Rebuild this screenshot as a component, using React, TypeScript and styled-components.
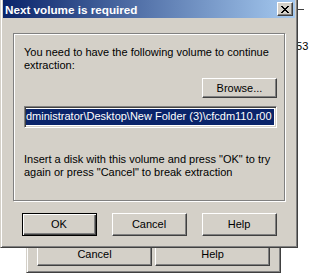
import React from "react";
import styled, { createGlobalStyle, css } from "styled-components";

const colors = {
  face: "#d4d0c8",
  light: "#ffffff",
  shadow: "#808080",
  dark: "#404040",
  navy: "#0a246a",
  sky: "#a6caf0",
};

const GlobalStyle = createGlobalStyle`
  html, body {
    margin: 0;
    padding: 0;
    background: #ffffff;
    overflow: hidden;
  }
  * {
    box-sizing: border-box;
  }
`;

const Desktop = styled.div`
  position: relative;
  width: 309px;
  height: 279px;
  overflow: hidden;
  background: #ffffff;
  font-family: "Liberation Sans", Arial, sans-serif;
  font-size: 11px;
  color: #000;
`;

const windowFrame = css`
  background: ${colors.face};
  border: 1px solid;
  border-color: ${colors.face} ${colors.dark} ${colors.dark} ${colors.face};
  box-shadow: inset 1px 1px ${colors.light}, inset -1px -1px ${colors.shadow};
`;

const BehindWindow = styled.div`
  ${windowFrame};
  position: absolute;
  left: 26px;
  top: 150px;
  width: 255px;
  height: 123px;
  display: flex;
  flex-direction: column;
  justify-content: flex-end;
  padding: 0 10px 6px 10px;
`;

const BehindRow = styled.div`
  display: flex;
  gap: 3px;
`;

const Corner = styled.div`
  position: absolute;
  left: 296px;
  top: 9px;
  width: 8px;
  height: 1px;
  background: ${colors.dark};
`;

const Fragment = styled.span`
  position: absolute;
  left: 290px;
  top: 39px;
  line-height: 13px;
  padding: 1px 0;
  white-space: nowrap;
`;

const Dialog = styled.div`
  ${windowFrame};
  position: absolute;
  left: 0;
  top: -3px;
  width: 298px;
  height: 251px;
  padding: 2px;
  display: flex;
  flex-direction: column;
`;

const TitleBar = styled.div`
  height: 18px;
  display: flex;
  align-items: center;
  justify-content: space-between;
  padding: 0 2px 0 2px;
  background: linear-gradient(to right, ${colors.navy}, ${colors.sky});
`;

const Title = styled.span`
  color: #fff;
  font-weight: bold;
  font-size: 11.7px;
  line-height: 14px;
  padding-top: 1px;
  white-space: nowrap;
`;

const CloseButton = styled.div`
  width: 16px;
  height: 14px;
  display: flex;
  align-items: center;
  justify-content: center;
  background: ${colors.face};
  border: 1px solid;
  border-color: ${colors.light} ${colors.dark} ${colors.dark} ${colors.light};
  box-shadow: inset -1px -1px ${colors.shadow};
`;

const Body = styled.div`
  flex: 1;
  display: flex;
  flex-direction: column;
  padding: 15px 10px 0 10px;
`;

const GroupBox = styled.div`
  height: 168px;
  border: 1px solid ${colors.shadow};
  box-shadow: inset 1px 1px ${colors.light}, 1px 1px ${colors.light};
  padding: 12px 7px 0 10px;
  display: flex;
  flex-direction: column;
`;

const Paragraph = styled.p<{ $gap?: number }>`
  margin: ${(p) => p.$gap ?? 0}px 0 0 0;
  line-height: 13px;
  white-space: nowrap;
`;

const BrowseRow = styled.div`
  display: flex;
  justify-content: flex-end;
  margin-top: 6px;
`;

const Button = styled.div<{ $default?: boolean; $width?: number; $height?: number }>`
  width: ${(p) => p.$width ?? 75}px;
  height: ${(p) => p.$height ?? 23}px;
  display: flex;
  align-items: center;
  justify-content: center;
  background: ${colors.face};
  line-height: 13px;
  ${(p) =>
    p.$default
      ? css`
          border: 1px solid #000;
          box-shadow: inset 1px 1px ${colors.light}, inset -1px -1px ${colors.dark},
            inset -2px -2px ${colors.shadow};
        `
      : css`
          border: 1px solid;
          border-color: ${colors.light} ${colors.dark} ${colors.dark} ${colors.light};
          box-shadow: inset -1px -1px ${colors.shadow};
        `}
`;

const TextField = styled.div`
  margin-top: 8px;
  height: 22px;
  background: #fff;
  border: 1px solid;
  border-color: ${colors.shadow} ${colors.light} ${colors.light} ${colors.shadow};
  box-shadow: inset 1px 1px ${colors.dark}, inset -1px -1px ${colors.face};
  padding: 2px 2px 2px 1px;
  overflow: hidden;
`;

const Selection = styled.span`
  display: block;
  height: 16px;
  line-height: 15px;
  background: ${colors.navy};
  color: #fff;
  white-space: nowrap;
  overflow: hidden;
`;

const ButtonRow = styled.div`
  display: flex;
  justify-content: center;
  gap: 15px;
  margin-top: 12px;
`;

const CloseGlyph: React.FC = () => {
  const rows = [
    "xx....xx",
    ".xx..xx.",
    "..xxxx..",
    "...xx...",
    "..xxxx..",
    ".xx..xx.",
    "xx....xx",
  ];
  return (
    <svg width="8" height="7" viewBox="0 0 8 7" shapeRendering="crispEdges">
      {rows.map((row, y) =>
        row.split("").map((c, x) =>
          c === "x" ? <rect key={`${x}-${y}`} x={x} y={y} width="1" height="1" fill="#000" /> : null
        )
      )}
    </svg>
  );
};

const App: React.FC = () => {
  return (
    <>
      <GlobalStyle />
      <Desktop>
        <Corner />
        <Fragment>b53</Fragment>
        <BehindWindow>
          <BehindRow>
            <Button $width={115}>Cancel</Button>
            <Button $width={115}>Help</Button>
          </BehindRow>
        </BehindWindow>
        <Dialog>
          <TitleBar>
            <Title>Next volume is required</Title>
            <CloseButton>
              <CloseGlyph />
            </CloseButton>
          </TitleBar>
          <Body>
            <GroupBox>
              <Paragraph>
                You need to have the following volume to continue
                <br />
                extraction:
              </Paragraph>
              <BrowseRow>
                <Button $height={20}>Browse...</Button>
              </BrowseRow>
              <TextField>
                <Selection>dministrator\Desktop\New Folder (3)\cfcdm110.r00</Selection>
              </TextField>
              <Paragraph $gap={25}>
                Insert a disk with this volume and press "OK" to try
                <br />
                again or press "Cancel" to break extraction
              </Paragraph>
            </GroupBox>
            <ButtonRow>
              <Button $default>OK</Button>
              <Button>Cancel</Button>
              <Button>Help</Button>
            </ButtonRow>
          </Body>
        </Dialog>
      </Desktop>
    </>
  );
};

export default App;
